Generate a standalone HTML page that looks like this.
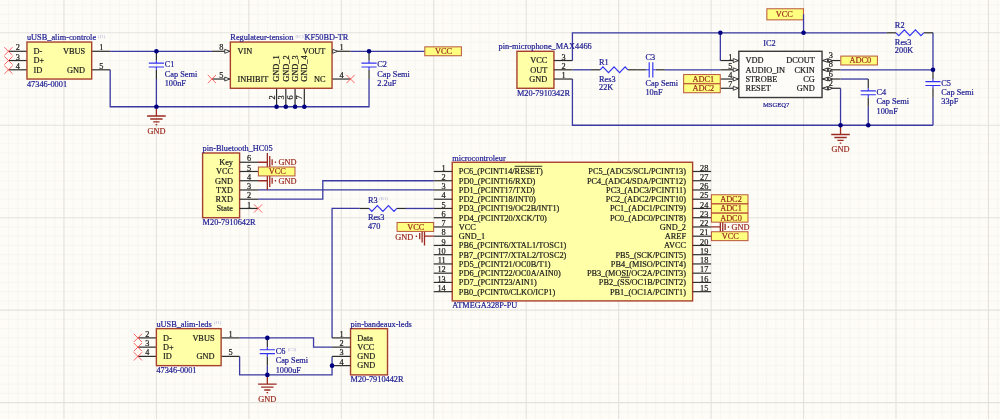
<!DOCTYPE html>
<html lang="fr"><head><meta charset="utf-8"><title>Schema</title>
<style>
html,body{margin:0;padding:0;background:#fefcf7;}
body{width:1000px;height:419px;overflow:hidden;}
svg{display:block;font-family:"Liberation Serif",serif;font-size:8.3px;}
.k{fill:#1a1a1a;stroke:#1a1a1a;stroke-width:0.2px}.b{fill:#1a1a90;stroke:#1a1a90;stroke-width:0.2px}.m{fill:#98281c;stroke:#98281c;stroke-width:0.2px}
</style></head><body>
<svg width="1000" height="419" viewBox="0 0 1000 419">
<rect width="1000" height="419" fill="#fefcf7"/>
<g style="will-change:transform">
<path d="M8.48 0V419M17.73 0V419M26.97 0V419M36.22 0V419M45.46 0V419M54.71 0V419M73.2 0V419M82.44 0V419M91.69 0V419M100.93 0V419M110.18 0V419M119.42 0V419M128.67 0V419M137.91 0V419M147.16 0V419M165.65 0V419M174.89 0V419M184.13 0V419M193.38 0V419M202.62 0V419M211.87 0V419M221.12 0V419M230.36 0V419M239.61 0V419M258.1 0V419M267.34 0V419M276.58 0V419M285.83 0V419M295.07 0V419M304.32 0V419M313.56 0V419M322.81 0V419M332.05 0V419M350.54 0V419M359.79 0V419M369.03 0V419M378.28 0V419M387.52 0V419M396.77 0V419M406.01 0V419M415.26 0V419M424.5 0V419M443 0V419M452.24 0V419M461.49 0V419M470.73 0V419M479.98 0V419M489.22 0V419M498.47 0V419M507.71 0V419M516.95 0V419M535.44 0V419M544.69 0V419M553.93 0V419M563.18 0V419M572.42 0V419M581.67 0V419M590.91 0V419M600.16 0V419M609.4 0V419M627.89 0V419M637.14 0V419M646.38 0V419M655.63 0V419M664.88 0V419M674.12 0V419M683.36 0V419M692.61 0V419M701.85 0V419M720.34 0V419M729.59 0V419M738.83 0V419M748.08 0V419M757.32 0V419M766.57 0V419M775.81 0V419M785.06 0V419M794.3 0V419M812.79 0V419M822.04 0V419M831.28 0V419M840.53 0V419M849.77 0V419M859.02 0V419M868.26 0V419M877.51 0V419M886.75 0V419M905.24 0V419M914.49 0V419M923.73 0V419M932.98 0V419M942.22 0V419M951.47 0V419M960.71 0V419M969.96 0V419M979.2 0V419M997.69 0V419M0 5.08H1000M0 14.32H1000M0 23.56H1000M0 42.05H1000M0 51.3H1000M0 60.54H1000M0 69.79H1000M0 79.03H1000M0 88.28H1000M0 97.52H1000M0 106.77H1000M0 116.01H1000M0 134.5H1000M0 143.75H1000M0 153H1000M0 162.24H1000M0 171.48H1000M0 180.73H1000M0 189.97H1000M0 199.22H1000M0 208.46H1000M0 226.95H1000M0 236.2H1000M0 245.44H1000M0 254.69H1000M0 263.94H1000M0 273.18H1000M0 282.42H1000M0 291.67H1000M0 300.91H1000M0 319.4H1000M0 328.65H1000M0 337.89H1000M0 347.14H1000M0 356.38H1000M0 365.63H1000M0 374.88H1000M0 384.12H1000M0 393.37H1000M0 411.85H1000" stroke="#f8f6f0" stroke-width="1.2" fill="none"/>
<path d="M63.95 0V419M156.4 0V419M248.85 0V419M341.3 0V419M433.75 0V419M526.2 0V419M618.65 0V419M711.1 0V419M803.55 0V419M896 0V419M988.45 0V419M0 32.81H1000M0 125.26H1000M0 217.71H1000M0 310.16H1000M0 402.61H1000" stroke="#e4e2dd" stroke-width="1.1" fill="none"/>
<path d="M110.18 51.3 L211.87 51.3" stroke="#3a3aa2" stroke-width="1.3" fill="none" stroke-linejoin="miter"/>
<path d="M110.18 69.79 L110.18 106.77 L369.03 106.77 L369.03 79.03" stroke="#3a3aa2" stroke-width="1.3" fill="none" stroke-linejoin="miter"/>
<path d="M156.4 79.03 L156.4 106.77" stroke="#3a3aa2" stroke-width="1.3" fill="none" stroke-linejoin="miter"/>
<path d="M350.54 51.3 L424.5 51.3" stroke="#3a3aa2" stroke-width="1.3" fill="none" stroke-linejoin="miter"/>
<path d="M572.42 60.54 L572.42 32.81 L886.75 32.81" stroke="#3a3aa2" stroke-width="1.3" fill="none" stroke-linejoin="miter"/>
<path d="M720.34 32.81 L720.34 60.54" stroke="#3a3aa2" stroke-width="1.3" fill="none" stroke-linejoin="miter"/>
<path d="M932.98 32.81 L932.98 69.79" stroke="#3a3aa2" stroke-width="1.3" fill="none" stroke-linejoin="miter"/>
<path d="M932.98 97.52 L932.98 125.26" stroke="#3a3aa2" stroke-width="1.3" fill="none" stroke-linejoin="miter"/>
<path d="M572.42 69.79 L590.91 69.79" stroke="#3a3aa2" stroke-width="1.3" fill="none" stroke-linejoin="miter"/>
<path d="M664.88 69.79 L720.34 69.79" stroke="#3a3aa2" stroke-width="1.3" fill="none" stroke-linejoin="miter"/>
<path d="M572.42 79.03 L572.42 125.26 L932.98 125.26" stroke="#3a3aa2" stroke-width="1.3" fill="none" stroke-linejoin="miter"/>
<path d="M840.53 69.79 L932.98 69.79" stroke="#3a3aa2" stroke-width="1.3" fill="none" stroke-linejoin="miter"/>
<path d="M840.53 79.03 L868.26 79.03" stroke="#3a3aa2" stroke-width="1.3" fill="none" stroke-linejoin="miter"/>
<path d="M868.26 106.77 L868.26 125.26" stroke="#3a3aa2" stroke-width="1.3" fill="none" stroke-linejoin="miter"/>
<path d="M840.53 88.28 L840.53 125.26" stroke="#3a3aa2" stroke-width="1.3" fill="none" stroke-linejoin="miter"/>
<path d="M258.1 189.97 L433.75 189.97" stroke="#3a3aa2" stroke-width="1.3" fill="none" stroke-linejoin="miter"/>
<path d="M258.1 199.22 L322.81 199.22 L322.81 180.73 L433.75 180.73" stroke="#3a3aa2" stroke-width="1.3" fill="none" stroke-linejoin="miter"/>
<path d="M332.05 337.89 L332.05 208.46 L359.79 208.46" stroke="#3a3aa2" stroke-width="1.3" fill="none" stroke-linejoin="miter"/>
<path d="M406.01 208.46 L433.75 208.46" stroke="#3a3aa2" stroke-width="1.3" fill="none" stroke-linejoin="miter"/>
<path d="M239.61 337.89 L313.56 337.89 L313.56 347.14 L332.05 347.14" stroke="#3a3aa2" stroke-width="1.3" fill="none" stroke-linejoin="miter"/>
<path d="M239.61 356.38 L239.61 374.88 L332.05 374.88 L332.05 356.38" stroke="#3a3aa2" stroke-width="1.3" fill="none" stroke-linejoin="miter"/>
<path d="M267.34 365.63 L267.34 374.88" stroke="#3a3aa2" stroke-width="1.3" fill="none" stroke-linejoin="miter"/>
<path d="M8.48 51.3L26.97 51.3" stroke="#2e2e2e" stroke-width="1.2" fill="none"/>
<path d="M4.38 47.2L12.58 55.4M4.38 55.4L12.58 47.2" stroke="#ff4848" stroke-width="0.85" fill="none"/>
<path d="M8.48 60.54L26.97 60.54" stroke="#2e2e2e" stroke-width="1.2" fill="none"/>
<path d="M4.38 56.44L12.58 64.64M4.38 64.64L12.58 56.44" stroke="#ff4848" stroke-width="0.85" fill="none"/>
<path d="M8.48 69.79L26.97 69.79" stroke="#2e2e2e" stroke-width="1.2" fill="none"/>
<path d="M4.38 65.69L12.58 73.89M4.38 73.89L12.58 65.69" stroke="#ff4848" stroke-width="0.85" fill="none"/>
<path d="M91.69 51.3L110.18 51.3" stroke="#2e2e2e" stroke-width="1.2" fill="none"/>
<path d="M91.69 69.79L110.18 69.79" stroke="#2e2e2e" stroke-width="1.2" fill="none"/>
<rect x="26.97" y="42.05" width="64.71" height="36.98" fill="#ffffa8" stroke="#a8402e" stroke-width="1.4"/>
<text x="19.97" y="50.4" class="k" text-anchor="end">2</text>
<text x="33.57" y="54.15" class="k">D-</text>
<text x="19.97" y="59.64" class="k" text-anchor="end">3</text>
<text x="33.57" y="63.39" class="k">D+</text>
<text x="19.97" y="68.89" class="k" text-anchor="end">4</text>
<text x="33.57" y="72.64" class="k">ID</text>
<text x="99.19" y="50.4" class="k">1</text>
<text x="85.09" y="54.15" class="k" text-anchor="end">VBUS</text>
<text x="99.19" y="68.89" class="k">5</text>
<text x="85.09" y="72.64" class="k" text-anchor="end">GND</text>
<text x="26.97" y="40.05" class="b">uUSB_alim-controle</text>
<text x="98" y="37.66" fill="#acaed8" font-size="4.7">(J1)</text>
<text x="26.97" y="86.73" class="b">47346-0001</text>
<path d="M137.91 337.89L156.4 337.89" stroke="#2e2e2e" stroke-width="1.2" fill="none"/>
<path d="M133.81 333.79L142.01 342M133.81 342L142.01 333.79" stroke="#ff4848" stroke-width="0.85" fill="none"/>
<path d="M137.91 347.14L156.4 347.14" stroke="#2e2e2e" stroke-width="1.2" fill="none"/>
<path d="M133.81 343.04L142.01 351.24M133.81 351.24L142.01 343.04" stroke="#ff4848" stroke-width="0.85" fill="none"/>
<path d="M137.91 356.38L156.4 356.38" stroke="#2e2e2e" stroke-width="1.2" fill="none"/>
<path d="M133.81 352.28L142.01 360.49M133.81 360.49L142.01 352.28" stroke="#ff4848" stroke-width="0.85" fill="none"/>
<path d="M221.12 337.89L239.61 337.89" stroke="#2e2e2e" stroke-width="1.2" fill="none"/>
<path d="M221.12 356.38L239.61 356.38" stroke="#2e2e2e" stroke-width="1.2" fill="none"/>
<rect x="156.4" y="328.65" width="64.72" height="36.98" fill="#ffffa8" stroke="#a8402e" stroke-width="1.4"/>
<text x="149.4" y="337" class="k" text-anchor="end">2</text>
<text x="163" y="340.75" class="k">D-</text>
<text x="149.4" y="346.24" class="k" text-anchor="end">3</text>
<text x="163" y="349.99" class="k">D+</text>
<text x="149.4" y="355.49" class="k" text-anchor="end">4</text>
<text x="163" y="359.24" class="k">ID</text>
<text x="228.62" y="337" class="k">1</text>
<text x="214.52" y="340.75" class="k" text-anchor="end">VBUS</text>
<text x="228.62" y="355.49" class="k">5</text>
<text x="214.52" y="359.24" class="k" text-anchor="end">GND</text>
<text x="156.4" y="326.65" class="b">uUSB_alim-leds</text>
<text x="214" y="324.25" fill="#acaed8" font-size="4.7">(J1)</text>
<text x="156.4" y="373.33" class="b">47346-0001</text>
<path d="M156.4 51.3L156.4 60.54" stroke="#2e2e2e" stroke-width="1.2" fill="none"/>
<path d="M156.4 69.79L156.4 79.03" stroke="#2e2e2e" stroke-width="1.2" fill="none"/>
<path d="M156.4 60.54V63.13M156.4 67.03V69.79M148.8 63.13H164M148.8 67.03H164" stroke="#3232f0" stroke-width="1.15" fill="none"/>
<text x="164.7" y="67.3" class="b">C1</text>
<text x="164.7" y="76.7" class="b">Cap Semi</text>
<text x="164.7" y="85.9" class="b">100nF</text>
<path d="M369.03 51.3L369.03 60.54" stroke="#2e2e2e" stroke-width="1.2" fill="none"/>
<path d="M369.03 69.79L369.03 79.03" stroke="#2e2e2e" stroke-width="1.2" fill="none"/>
<path d="M369.03 60.54V63.13M369.03 67.03V69.79M361.43 63.13H376.63M361.43 67.03H376.63" stroke="#3232f0" stroke-width="1.15" fill="none"/>
<text x="377.33" y="67.3" class="b">C2</text>
<text x="377.33" y="76.7" class="b">Cap Semi</text>
<text x="377.33" y="85.9" class="b">2.2uF</text>
<path d="M211.87 51.3L230.36 51.3" stroke="#2e2e2e" stroke-width="1.2" fill="none"/>
<path d="M211.87 79.03L230.36 79.03" stroke="#2e2e2e" stroke-width="1.2" fill="none"/>
<path d="M332.05 51.3L350.54 51.3" stroke="#2e2e2e" stroke-width="1.2" fill="none"/>
<path d="M332.05 79.03L350.54 79.03" stroke="#2e2e2e" stroke-width="1.2" fill="none"/>
<path d="M276.58 88.28L276.58 106.77" stroke="#2e2e2e" stroke-width="1.2" fill="none"/>
<path d="M285.83 88.28L285.83 106.77" stroke="#2e2e2e" stroke-width="1.2" fill="none"/>
<path d="M295.07 88.28L295.07 106.77" stroke="#2e2e2e" stroke-width="1.2" fill="none"/>
<path d="M304.32 88.28L304.32 106.77" stroke="#2e2e2e" stroke-width="1.2" fill="none"/>
<path d="M207.77 74.94L215.97 83.13M207.77 83.13L215.97 74.94" stroke="#ff4848" stroke-width="0.85" fill="none"/>
<path d="M346.44 74.94L354.64 83.13M346.44 83.13L354.64 74.94" stroke="#ff4848" stroke-width="0.85" fill="none"/>
<rect x="230.36" y="42.05" width="101.69" height="46.23" fill="#ffffa8" stroke="#a8402e" stroke-width="1.4"/>
<path d="M229.76 51.3L224.76 49.3L224.76 53.3Z" fill="#fff" stroke="#2e2e2e" stroke-width="0.9"/>
<path d="M229.76 79.03L224.76 77.03L224.76 81.03Z" fill="#fff" stroke="#2e2e2e" stroke-width="0.9"/>
<path d="M337.65 51.3L332.65 49.3L332.65 53.3Z" fill="#fff" stroke="#2e2e2e" stroke-width="0.9"/>
<text x="223.36" y="50.4" class="k" text-anchor="end">8</text>
<text x="223.36" y="78.13" class="k" text-anchor="end">5</text>
<text x="339.55" y="50.4" class="k">1</text>
<text x="339.55" y="78.13" class="k">4</text>
<text x="237.56" y="54.15" class="k">VIN</text>
<text x="237.56" y="81.88" class="k">INHIBIT</text>
<text x="325.45" y="54.15" class="k" text-anchor="end">VOUT</text>
<text x="325.45" y="81.88" class="k" text-anchor="end">NC</text>
<text transform="translate(279.44 81.68) rotate(-90)" class="k">GND_1</text>
<text transform="translate(274.69 95.28) rotate(-90)" class="k" text-anchor="end">2</text>
<text transform="translate(288.68 81.68) rotate(-90)" class="k">GND_2</text>
<text transform="translate(283.93 95.28) rotate(-90)" class="k" text-anchor="end">3</text>
<text transform="translate(297.93 81.68) rotate(-90)" class="k">GND_3</text>
<text transform="translate(293.18 95.28) rotate(-90)" class="k" text-anchor="end">6</text>
<text transform="translate(307.17 81.68) rotate(-90)" class="k">GND_4</text>
<text transform="translate(302.42 95.28) rotate(-90)" class="k" text-anchor="end">7</text>
<text x="230.36" y="40.05" class="b">Regulateur-tension</text>
<text x="295.5" y="37.66" fill="#acaed8" font-size="4.7">(IC1)</text>
<text x="304.6" y="40.05" class="b">KF50BD-TR</text>
<rect x="424.81" y="46.85" width="36.58" height="8.9" fill="#ffff80" stroke="#b8553a" stroke-width="1"/>
<text x="443.6" y="54.15" class="m" text-anchor="middle">VCC</text>
<path d="M156.4 106.77V116.02M147.1 116.02H165.7M150.2 119.02H162.6M153.3 121.92H159.5M155.6 124.61H157.2" stroke="#9a2c24" stroke-width="1.3" fill="none"/>
<text x="156.4" y="133.57" class="m" text-anchor="middle">GND</text>
<rect x="516.95" y="51.3" width="36.98" height="36.98" fill="#ffffa8" stroke="#a8402e" stroke-width="1.4"/>
<path d="M553.93 60.54L572.42 60.54" stroke="#2e2e2e" stroke-width="1.2" fill="none"/>
<text x="561.43" y="59.64" class="k">3</text>
<text x="547.33" y="63.39" class="k" text-anchor="end">VCC</text>
<path d="M553.93 69.79L572.42 69.79" stroke="#2e2e2e" stroke-width="1.2" fill="none"/>
<text x="561.43" y="68.89" class="k">2</text>
<text x="547.33" y="72.64" class="k" text-anchor="end">OUT</text>
<path d="M553.93 79.03L572.42 79.03" stroke="#2e2e2e" stroke-width="1.2" fill="none"/>
<text x="561.43" y="78.13" class="k">1</text>
<text x="547.33" y="81.88" class="k" text-anchor="end">GND</text>
<text x="498.6" y="49.4" class="b">pin-microphone_MAX4466</text>
<text x="516.95" y="95.68" class="b">M20-7910342R</text>
<path d="M590.91 69.79L600.16 69.79" stroke="#2e2e2e" stroke-width="1.2" fill="none"/>
<path d="M627.89 69.79L637.14 69.79" stroke="#2e2e2e" stroke-width="1.2" fill="none"/>
<path d="M600.16 69.79 L602.93 66.89 L608.48 72.69 L614.03 66.89 L619.57 72.69 L625.12 66.89 L627.89 69.79" stroke="#3232f0" stroke-width="1.15" fill="none" stroke-linejoin="miter"/>
<text x="599.01" y="64.59" class="b">R1</text>
<text x="599.01" y="81.59" class="b">Res3</text>
<text x="599.01" y="90.39" class="b">22K</text>
<path d="M637.14 69.79L646.38 69.79" stroke="#2e2e2e" stroke-width="1.2" fill="none"/>
<path d="M655.63 69.79L664.88 69.79" stroke="#2e2e2e" stroke-width="1.2" fill="none"/>
<path d="M646.38 69.79H649.21M652.81 69.79H655.63M649.21 62.19V77.39M652.81 62.19V77.39" stroke="#3232f0" stroke-width="1.15" fill="none"/>
<text x="645.44" y="60.09" class="b">C3</text>
<text x="645.44" y="86.09" class="b">Cap Semi</text>
<text x="645.44" y="95.39" class="b">10nF</text>
<rect x="738.83" y="51.3" width="83.21" height="46.22" fill="#fefcf8" stroke="#3a3a3a" stroke-width="1.4"/>
<path d="M720.34 60.54L738.83 60.54" stroke="#2e2e2e" stroke-width="1.2" fill="none"/>
<text x="732.33" y="59.64" class="k" text-anchor="end">1</text>
<text x="745.43" y="63.39" class="k">VDD</text>
<path d="M738.23 60.54L733.23 58.54L733.23 62.54Z" fill="#fff" stroke="#2e2e2e" stroke-width="0.9"/>
<path d="M720.34 69.79L738.83 69.79" stroke="#2e2e2e" stroke-width="1.2" fill="none"/>
<text x="732.33" y="68.89" class="k" text-anchor="end">5</text>
<text x="745.43" y="72.64" class="k">AUDIO_IN</text>
<path d="M738.23 69.79L733.23 67.79L733.23 71.79Z" fill="#fff" stroke="#2e2e2e" stroke-width="0.9"/>
<path d="M720.34 79.03L738.83 79.03" stroke="#2e2e2e" stroke-width="1.2" fill="none"/>
<text x="732.33" y="78.13" class="k" text-anchor="end">4</text>
<text x="745.43" y="81.88" class="k">STROBE</text>
<path d="M738.23 79.03L733.23 77.03L733.23 81.03Z" fill="#fff" stroke="#2e2e2e" stroke-width="0.9"/>
<path d="M720.34 88.28L738.83 88.28" stroke="#2e2e2e" stroke-width="1.2" fill="none"/>
<text x="732.33" y="87.38" class="k" text-anchor="end">7</text>
<text x="745.43" y="91.13" class="k">RESET</text>
<path d="M738.23 88.28L733.23 86.28L733.23 90.28Z" fill="#fff" stroke="#2e2e2e" stroke-width="0.9"/>
<path d="M822.04 60.54L840.53 60.54" stroke="#2e2e2e" stroke-width="1.2" fill="none"/>
<text x="828.84" y="58.24" class="k">3</text>
<text x="814.84" y="63.39" class="k" text-anchor="end">DCOUT</text>
<path d="M822.74 60.54L827.64 58.74L827.64 62.34ZM832.44 60.54L828.24 58.74L828.24 62.34Z" fill="#f4f4f4" stroke="#2e2e2e" stroke-width="1"/>
<path d="M822.04 69.79L840.53 69.79" stroke="#2e2e2e" stroke-width="1.2" fill="none"/>
<text x="828.84" y="67.49" class="k">8</text>
<text x="814.84" y="72.64" class="k" text-anchor="end">CKIN</text>
<path d="M822.74 69.79L827.64 67.99L827.64 71.59ZM832.44 69.79L828.24 67.99L828.24 71.59Z" fill="#f4f4f4" stroke="#2e2e2e" stroke-width="1"/>
<path d="M822.04 79.03L840.53 79.03" stroke="#2e2e2e" stroke-width="1.2" fill="none"/>
<text x="828.84" y="76.73" class="k">6</text>
<text x="814.84" y="81.88" class="k" text-anchor="end">CG</text>
<path d="M822.74 79.03L827.64 77.23L827.64 80.83ZM832.44 79.03L828.24 77.23L828.24 80.83Z" fill="#f4f4f4" stroke="#2e2e2e" stroke-width="1"/>
<path d="M822.04 88.28L840.53 88.28" stroke="#2e2e2e" stroke-width="1.2" fill="none"/>
<text x="828.84" y="85.98" class="k">2</text>
<text x="814.84" y="91.13" class="k" text-anchor="end">GND</text>
<path d="M822.74 88.28L827.64 86.48L827.64 90.08ZM832.44 88.28L828.24 86.48L828.24 90.08Z" fill="#f4f4f4" stroke="#2e2e2e" stroke-width="1"/>
<text x="763.2" y="46.4" class="b">IC2</text>
<text x="763" y="107.4" class="b" font-size="6.6">MSGEQ7</text>
<rect x="683.66" y="74.58" width="36.58" height="8.9" fill="#ffff80" stroke="#b8553a" stroke-width="1"/>
<text x="703.25" y="81.88" class="m" text-anchor="middle">ADC1</text>
<rect x="683.66" y="83.83" width="36.58" height="8.9" fill="#ffff80" stroke="#b8553a" stroke-width="1"/>
<text x="703.25" y="91.13" class="m" text-anchor="middle">ADC2</text>
<rect x="840.83" y="56.09" width="36.58" height="8.9" fill="#ffff80" stroke="#b8553a" stroke-width="1"/>
<text x="860.42" y="63.39" class="m" text-anchor="middle">ADC0</text>
<rect x="766.87" y="8.77" width="36.58" height="11.1" fill="#ffff80" stroke="#b8553a" stroke-width="1"/>
<text x="784.36" y="17.17" class="m" text-anchor="middle">VCC</text>
<path d="M803.55 14.32 L803.55 32.81" stroke="#3a3aa2" stroke-width="1.3" fill="none" stroke-linejoin="miter"/>
<path d="M886.75 32.81L896 32.81" stroke="#2e2e2e" stroke-width="1.2" fill="none"/>
<path d="M923.73 32.81L932.98 32.81" stroke="#2e2e2e" stroke-width="1.2" fill="none"/>
<path d="M896 32.81 L898.77 35.71 L904.32 29.91 L909.87 35.71 L915.41 29.91 L920.96 35.71 L923.73 32.81" stroke="#3232f0" stroke-width="1.15" fill="none" stroke-linejoin="miter"/>
<text x="894.85" y="27.61" class="b">R2</text>
<text x="894.85" y="44.61" class="b">Res3</text>
<text x="894.85" y="53.41" class="b">200K</text>
<path d="M868.26 79.03L868.26 88.28" stroke="#2e2e2e" stroke-width="1.2" fill="none"/>
<path d="M868.26 97.52L868.26 106.77" stroke="#2e2e2e" stroke-width="1.2" fill="none"/>
<path d="M868.26 88.28V90.86M868.26 94.76V97.52M860.66 90.86H875.86M860.66 94.76H875.86" stroke="#3232f0" stroke-width="1.15" fill="none"/>
<text x="876.56" y="95.03" class="b">C4</text>
<text x="876.56" y="104.44" class="b">Cap Semi</text>
<text x="876.56" y="113.63" class="b">100nF</text>
<path d="M932.98 69.79L932.98 79.03" stroke="#2e2e2e" stroke-width="1.2" fill="none"/>
<path d="M932.98 88.28L932.98 97.52" stroke="#2e2e2e" stroke-width="1.2" fill="none"/>
<path d="M932.98 79.03V81.62M932.98 85.52V88.28M925.38 81.62H940.58M925.38 85.52H940.58" stroke="#3232f0" stroke-width="1.15" fill="none"/>
<text x="941.28" y="85.79" class="b">C5</text>
<text x="941.28" y="95.19" class="b">Cap Semi</text>
<text x="941.28" y="104.39" class="b">33pF</text>
<path d="M840.53 125.26V134.5M831.23 134.5H849.83M834.33 137.5H846.73M837.43 140.41H843.63M839.73 143.1H841.33" stroke="#9a2c24" stroke-width="1.3" fill="none"/>
<text x="840.53" y="152.06" class="m" text-anchor="middle">GND</text>
<path d="M258.1 162.24H267.34M267.34 152.94V171.54M269.74 156.04V168.44M272.14 159.14V165.34M275.44 161.44V163.04" stroke="#9a2c24" stroke-width="1.3" fill="none"/>
<text x="278.6" y="165.14" class="m">GND</text>
<path d="M258.1 180.73H267.34M267.34 171.43V190.03M269.74 174.53V186.93M272.14 177.63V183.83M275.44 179.93V181.53" stroke="#9a2c24" stroke-width="1.3" fill="none"/>
<text x="278.6" y="183.63" class="m">GND</text>
<rect x="202.62" y="153" width="36.98" height="64.71" fill="#ffffa8" stroke="#a8402e" stroke-width="1.4"/>
<path d="M239.61 162.24L258.1 162.24" stroke="#2e2e2e" stroke-width="1.2" fill="none"/>
<text x="247.11" y="161.34" class="k">6</text>
<text x="233.01" y="165.09" class="k" text-anchor="end">Key</text>
<path d="M239.61 171.48L258.1 171.48" stroke="#2e2e2e" stroke-width="1.2" fill="none"/>
<text x="247.11" y="170.58" class="k">5</text>
<text x="233.01" y="174.33" class="k" text-anchor="end">VCC</text>
<path d="M239.61 180.73L258.1 180.73" stroke="#2e2e2e" stroke-width="1.2" fill="none"/>
<text x="247.11" y="179.83" class="k">4</text>
<text x="233.01" y="183.58" class="k" text-anchor="end">GND</text>
<path d="M239.61 189.97L258.1 189.97" stroke="#2e2e2e" stroke-width="1.2" fill="none"/>
<text x="247.11" y="189.07" class="k">3</text>
<text x="233.01" y="192.82" class="k" text-anchor="end">TXD</text>
<path d="M239.61 199.22L258.1 199.22" stroke="#2e2e2e" stroke-width="1.2" fill="none"/>
<text x="247.11" y="198.32" class="k">2</text>
<text x="233.01" y="202.07" class="k" text-anchor="end">RXD</text>
<path d="M239.61 208.46L258.1 208.46" stroke="#2e2e2e" stroke-width="1.2" fill="none"/>
<text x="247.11" y="207.56" class="k">1</text>
<text x="233.01" y="211.31" class="k" text-anchor="end">State</text>
<path d="M254 204.36L262.2 212.56M254 212.56L262.2 204.36" stroke="#ff4848" stroke-width="0.85" fill="none"/>
<rect x="258.4" y="167.03" width="36.58" height="8.9" fill="#ffff80" stroke="#b8553a" stroke-width="1"/>
<text x="277.19" y="174.33" class="m" text-anchor="middle">VCC</text>
<text x="202.62" y="151" class="b">pin-Bluetooth_HC05</text>
<text x="202.62" y="225.21" class="b">M20-7910642R</text>
<path d="M359.79 208.46L369.03 208.46" stroke="#2e2e2e" stroke-width="1.2" fill="none"/>
<path d="M396.77 208.46L406.01 208.46" stroke="#2e2e2e" stroke-width="1.2" fill="none"/>
<path d="M369.03 208.46 L371.81 211.36 L377.36 205.56 L382.9 211.36 L388.45 205.56 L394 211.36 L396.77 208.46" stroke="#3232f0" stroke-width="1.15" fill="none" stroke-linejoin="miter"/>
<text x="367.89" y="203.26" class="b">R3</text>
<text x="367.89" y="220.26" class="b">Res3</text>
<text x="367.89" y="229.06" class="b">470</text>
<text x="379.3" y="200" fill="#acaed8" font-size="4.7">(R1)</text>
<path d="M433.75 236.2H424.5M424.5 226.9V245.5M422.11 230V242.4M419.7 233.1V239.3M416.4 235.4V237" stroke="#9a2c24" stroke-width="1.3" fill="none"/>
<text x="413.15" y="239.6" class="m" text-anchor="end">GND</text>
<path d="M711.1 226.95H720.34M720.34 217.65V236.25M722.74 220.75V233.15M725.14 223.85V230.05M728.44 226.15V227.75" stroke="#9a2c24" stroke-width="1.3" fill="none"/>
<text x="731.6" y="229.85" class="m">GND</text>
<rect x="452.24" y="162.24" width="240.37" height="138.67" fill="#ffffa8" stroke="#a8402e" stroke-width="1.4"/>
<path d="M433.75 171.48L452.24 171.48" stroke="#2e2e2e" stroke-width="1.2" fill="none"/>
<text x="445.74" y="170.58" class="k" text-anchor="end">1</text>
<text x="458.84" y="174.33" class="k">PC6_(PCINT14/RESET)</text>
<path d="M692.61 171.48L711.1 171.48" stroke="#2e2e2e" stroke-width="1.2" fill="none"/>
<text x="700.11" y="170.58" class="k">28</text>
<text x="686.01" y="174.33" class="k" text-anchor="end">PC5_(ADC5/SCL/PCINT13)</text>
<path d="M433.75 180.73L452.24 180.73" stroke="#2e2e2e" stroke-width="1.2" fill="none"/>
<text x="445.74" y="179.83" class="k" text-anchor="end">2</text>
<text x="458.84" y="183.58" class="k">PD0_(PCINT16/RXD)</text>
<path d="M692.61 180.73L711.1 180.73" stroke="#2e2e2e" stroke-width="1.2" fill="none"/>
<text x="700.11" y="179.83" class="k">27</text>
<text x="686.01" y="183.58" class="k" text-anchor="end">PC4_(ADC4/SDA/PCINT12)</text>
<path d="M433.75 189.97L452.24 189.97" stroke="#2e2e2e" stroke-width="1.2" fill="none"/>
<text x="445.74" y="189.07" class="k" text-anchor="end">3</text>
<text x="458.84" y="192.82" class="k">PD1_(PCINT17/TXD)</text>
<path d="M692.61 189.97L711.1 189.97" stroke="#2e2e2e" stroke-width="1.2" fill="none"/>
<text x="700.11" y="189.07" class="k">26</text>
<text x="686.01" y="192.82" class="k" text-anchor="end">PC3_(ADC3/PCINT11)</text>
<path d="M433.75 199.22L452.24 199.22" stroke="#2e2e2e" stroke-width="1.2" fill="none"/>
<text x="445.74" y="198.32" class="k" text-anchor="end">4</text>
<text x="458.84" y="202.07" class="k">PD2_(PCINT18/INT0)</text>
<path d="M692.61 199.22L711.1 199.22" stroke="#2e2e2e" stroke-width="1.2" fill="none"/>
<text x="700.11" y="198.32" class="k">25</text>
<text x="686.01" y="202.07" class="k" text-anchor="end">PC2_(ADC2/PCINT10)</text>
<path d="M433.75 208.46L452.24 208.46" stroke="#2e2e2e" stroke-width="1.2" fill="none"/>
<text x="445.74" y="207.56" class="k" text-anchor="end">5</text>
<text x="458.84" y="211.31" class="k">PD3_(PCINT19/OC2B/INT1)</text>
<path d="M692.61 208.46L711.1 208.46" stroke="#2e2e2e" stroke-width="1.2" fill="none"/>
<text x="700.11" y="207.56" class="k">24</text>
<text x="686.01" y="211.31" class="k" text-anchor="end">PC1_(ADC1/PCINT9)</text>
<path d="M433.75 217.71L452.24 217.71" stroke="#2e2e2e" stroke-width="1.2" fill="none"/>
<text x="445.74" y="216.81" class="k" text-anchor="end">6</text>
<text x="458.84" y="220.56" class="k">PD4_(PCINT20/XCK/T0)</text>
<path d="M692.61 217.71L711.1 217.71" stroke="#2e2e2e" stroke-width="1.2" fill="none"/>
<text x="700.11" y="216.81" class="k">23</text>
<text x="686.01" y="220.56" class="k" text-anchor="end">PC0_(ADC0/PCINT8)</text>
<path d="M433.75 226.95L452.24 226.95" stroke="#2e2e2e" stroke-width="1.2" fill="none"/>
<text x="445.74" y="226.05" class="k" text-anchor="end">7</text>
<text x="458.84" y="229.8" class="k">VCC</text>
<path d="M692.61 226.95L711.1 226.95" stroke="#2e2e2e" stroke-width="1.2" fill="none"/>
<text x="700.11" y="226.05" class="k">22</text>
<text x="686.01" y="229.8" class="k" text-anchor="end">GND_2</text>
<path d="M433.75 236.2L452.24 236.2" stroke="#2e2e2e" stroke-width="1.2" fill="none"/>
<text x="445.74" y="235.3" class="k" text-anchor="end">8</text>
<text x="458.84" y="239.05" class="k">GND_1</text>
<path d="M692.61 236.2L711.1 236.2" stroke="#2e2e2e" stroke-width="1.2" fill="none"/>
<text x="700.11" y="235.3" class="k">21</text>
<text x="686.01" y="239.05" class="k" text-anchor="end">AREF</text>
<path d="M433.75 245.44L452.24 245.44" stroke="#2e2e2e" stroke-width="1.2" fill="none"/>
<text x="445.74" y="244.54" class="k" text-anchor="end">9</text>
<text x="458.84" y="248.29" class="k">PB6_(PCINT6/XTAL1/TOSC1)</text>
<path d="M692.61 245.44L711.1 245.44" stroke="#2e2e2e" stroke-width="1.2" fill="none"/>
<text x="700.11" y="244.54" class="k">20</text>
<text x="686.01" y="248.29" class="k" text-anchor="end">AVCC</text>
<path d="M433.75 254.69L452.24 254.69" stroke="#2e2e2e" stroke-width="1.2" fill="none"/>
<text x="445.74" y="253.79" class="k" text-anchor="end">10</text>
<text x="458.84" y="257.54" class="k">PB7_(PCINT7/XTAL2/TOSC2)</text>
<path d="M692.61 254.69L711.1 254.69" stroke="#2e2e2e" stroke-width="1.2" fill="none"/>
<text x="700.11" y="253.79" class="k">19</text>
<text x="686.01" y="257.54" class="k" text-anchor="end">PB5_(SCK/PCINT5)</text>
<path d="M433.75 263.94L452.24 263.94" stroke="#2e2e2e" stroke-width="1.2" fill="none"/>
<text x="445.74" y="263.04" class="k" text-anchor="end">11</text>
<text x="458.84" y="266.79" class="k">PD5_(PCINT21/OC0B/T1)</text>
<path d="M692.61 263.94L711.1 263.94" stroke="#2e2e2e" stroke-width="1.2" fill="none"/>
<text x="700.11" y="263.04" class="k">18</text>
<text x="686.01" y="266.79" class="k" text-anchor="end">PB4_(MISO/PCINT4)</text>
<path d="M433.75 273.18L452.24 273.18" stroke="#2e2e2e" stroke-width="1.2" fill="none"/>
<text x="445.74" y="272.28" class="k" text-anchor="end">12</text>
<text x="458.84" y="276.03" class="k">PD6_(PCINT22/OC0A/AIN0)</text>
<path d="M692.61 273.18L711.1 273.18" stroke="#2e2e2e" stroke-width="1.2" fill="none"/>
<text x="700.11" y="272.28" class="k">17</text>
<text x="686.01" y="276.03" class="k" text-anchor="end">PB3_(MOSI/OC2A/PCINT3)</text>
<path d="M433.75 282.42L452.24 282.42" stroke="#2e2e2e" stroke-width="1.2" fill="none"/>
<text x="445.74" y="281.52" class="k" text-anchor="end">13</text>
<text x="458.84" y="285.27" class="k">PD7_(PCINT23/AIN1)</text>
<path d="M692.61 282.42L711.1 282.42" stroke="#2e2e2e" stroke-width="1.2" fill="none"/>
<text x="700.11" y="281.52" class="k">16</text>
<text x="686.01" y="285.27" class="k" text-anchor="end">PB2_(SS/OC1B/PCINT2)</text>
<path d="M433.75 291.67L452.24 291.67" stroke="#2e2e2e" stroke-width="1.2" fill="none"/>
<text x="445.74" y="290.77" class="k" text-anchor="end">14</text>
<text x="458.84" y="294.52" class="k">PB0_(PCINT0/CLKO/ICP1)</text>
<path d="M692.61 291.67L711.1 291.67" stroke="#2e2e2e" stroke-width="1.2" fill="none"/>
<text x="700.11" y="290.77" class="k">15</text>
<text x="686.01" y="294.52" class="k" text-anchor="end">PB1_(OC1A/PCINT1)</text>
<path d="M514.7 166.28L542.3 166.28" stroke="#1a1a1a" stroke-width="0.9" fill="none"/>
<path d="M620.7 277.22L629.6 277.22" stroke="#1a1a1a" stroke-width="0.9" fill="none"/>
<text x="452.24" y="160.64" class="b">microcontroleur</text>
<text x="452.24" y="308.41" class="b">ATMEGA328P-PU</text>
<rect x="397.07" y="222.5" width="36.58" height="8.9" fill="#ffff80" stroke="#b8553a" stroke-width="1"/>
<text x="415.86" y="229.8" class="m" text-anchor="middle">VCC</text>
<rect x="711.4" y="194.77" width="36.58" height="8.9" fill="#ffff80" stroke="#b8553a" stroke-width="1"/>
<text x="730.99" y="202.07" class="m" text-anchor="middle">ADC2</text>
<rect x="711.4" y="204.01" width="36.58" height="8.9" fill="#ffff80" stroke="#b8553a" stroke-width="1"/>
<text x="730.99" y="211.31" class="m" text-anchor="middle">ADC1</text>
<rect x="711.4" y="213.26" width="36.58" height="8.9" fill="#ffff80" stroke="#b8553a" stroke-width="1"/>
<text x="730.99" y="220.56" class="m" text-anchor="middle">ADC0</text>
<rect x="711.4" y="231.75" width="36.58" height="8.9" fill="#ffff80" stroke="#b8553a" stroke-width="1"/>
<text x="730.19" y="239.05" class="m" text-anchor="middle">VCC</text>
<path d="M267.34 337.89L267.34 347.14" stroke="#2e2e2e" stroke-width="1.2" fill="none"/>
<path d="M267.34 356.38L267.34 365.63" stroke="#2e2e2e" stroke-width="1.2" fill="none"/>
<path d="M267.34 347.14V349.72M267.34 353.62V356.38M259.74 349.72H274.94M259.74 353.62H274.94" stroke="#3232f0" stroke-width="1.15" fill="none"/>
<text x="275.64" y="353.89" class="b">C6</text>
<text x="275.64" y="363.29" class="b">Cap Semi</text>
<text x="275.64" y="372.5" class="b">1000uF</text>
<text x="287.8" y="350.6" fill="#acaed8" font-size="4.7">(C2)</text>
<path d="M267.34 374.88V384.12M258.04 384.12H276.64M261.14 387.12H273.54M264.24 390.02H270.44M266.54 392.72H268.14" stroke="#9a2c24" stroke-width="1.3" fill="none"/>
<text x="267.34" y="401.68" class="m" text-anchor="middle">GND</text>
<rect x="350.54" y="328.65" width="36.98" height="46.23" fill="#ffffa8" stroke="#a8402e" stroke-width="1.4"/>
<path d="M332.05 337.89L350.54 337.89" stroke="#2e2e2e" stroke-width="1.2" fill="none"/>
<text x="343.54" y="337" class="k" text-anchor="end">1</text>
<text x="357.34" y="340.75" class="k">Data</text>
<path d="M332.05 347.14L350.54 347.14" stroke="#2e2e2e" stroke-width="1.2" fill="none"/>
<text x="343.54" y="346.24" class="k" text-anchor="end">2</text>
<text x="357.34" y="349.99" class="k">VCC</text>
<path d="M332.05 356.38L350.54 356.38" stroke="#2e2e2e" stroke-width="1.2" fill="none"/>
<text x="343.54" y="355.49" class="k" text-anchor="end">3</text>
<text x="357.34" y="359.24" class="k">GND</text>
<path d="M332.05 365.63L350.54 365.63" stroke="#2e2e2e" stroke-width="1.2" fill="none"/>
<text x="343.54" y="364.73" class="k" text-anchor="end">4</text>
<text x="357.34" y="368.48" class="k">GND</text>
<text x="350.54" y="327.05" class="b">pin-bandeaux-leds</text>
<text x="350.54" y="382.27" class="b">M20-7910442R</text>
<circle cx="156.4" cy="51.3" r="2.3" fill="#000080"/>
<circle cx="156.4" cy="106.77" r="2.3" fill="#000080"/>
<circle cx="276.58" cy="106.77" r="2.3" fill="#000080"/>
<circle cx="285.83" cy="106.77" r="2.3" fill="#000080"/>
<circle cx="295.07" cy="106.77" r="2.3" fill="#000080"/>
<circle cx="304.32" cy="106.77" r="2.3" fill="#000080"/>
<circle cx="369.03" cy="51.3" r="2.3" fill="#000080"/>
<circle cx="720.34" cy="32.81" r="2.3" fill="#000080"/>
<circle cx="803.55" cy="32.81" r="2.3" fill="#000080"/>
<circle cx="932.98" cy="69.79" r="2.3" fill="#000080"/>
<circle cx="840.53" cy="125.26" r="2.3" fill="#000080"/>
<circle cx="868.26" cy="125.26" r="2.3" fill="#000080"/>
<circle cx="267.34" cy="337.89" r="2.3" fill="#000080"/>
<circle cx="267.34" cy="374.88" r="2.3" fill="#000080"/>
<circle cx="332.05" cy="365.63" r="2.3" fill="#000080"/>
</g>
</svg>
</body></html>
